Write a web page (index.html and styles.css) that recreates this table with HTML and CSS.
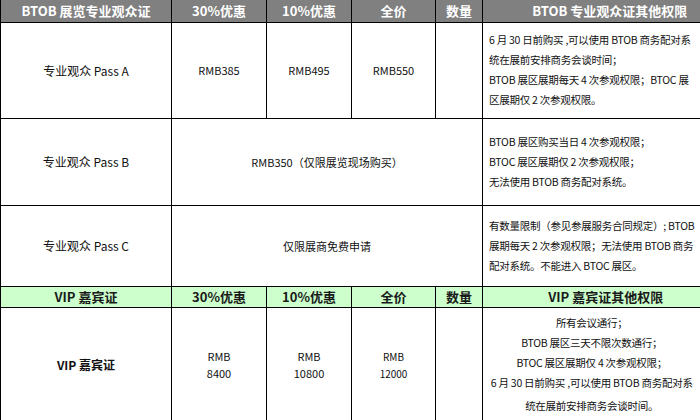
FILE: index.html
```html
<!DOCTYPE html>
<html lang="zh">
<head>
<meta charset="utf-8">
<title>BTOB 展览专业观众证</title>
<link rel="stylesheet" href="styles.css">
</head>
<body>
<table class="price-table">
  <colgroup>
    <col class="c-name">
    <col class="c-30">
    <col class="c-10">
    <col class="c-full">
    <col class="c-qty">
    <col class="c-rights">
  </colgroup>
  <tr class="head head-gray">
    <th>BTOB 展览专业观众证</th>
    <th>30%优惠</th>
    <th>10%优惠</th>
    <th>全价</th>
    <th>数量</th>
    <th class="rights-head rights-head-a">BTOB 专业观众证其他权限</th>
  </tr>
  <tr class="row-a">
    <td class="name">专业观众 Pass A</td>
    <td class="price">RMB385</td>
    <td class="price">RMB495</td>
    <td class="price">RMB550</td>
    <td></td>
    <td class="rights">
      <div class="line">6 月 30 日前购买 ,可以使用 BTOB 商务配对系</div>
      <div class="line">统在展前安排商务会谈时间；</div>
      <div class="line">BTOB 展区展期每天 4 次参观权限；BTOC 展</div>
      <div class="line">区展期仅 2 次参观权限。</div>
    </td>
  </tr>
  <tr class="row-b">
    <td class="name">专业观众 Pass B</td>
    <td class="price" colspan="4">RMB350（仅限展览现场购买）</td>
    <td class="rights">
      <div class="line">BTOB 展区购买当日 4 次参观权限；</div>
      <div class="line">BTOC 展区展期仅 2 次参观权限；</div>
      <div class="line">无法使用 BTOB 商务配对系统。</div>
    </td>
  </tr>
  <tr class="row-c">
    <td class="name">专业观众 Pass C</td>
    <td class="price" colspan="4">仅限展商免费申请</td>
    <td class="rights">
      <div class="line">有数量限制（参见参展服务合同规定）; BTOB</div>
      <div class="line">展期每天 2 次参观权限；无法使用 BTOB 商务</div>
      <div class="line">配对系统。不能进入 BTOC 展区。</div>
    </td>
  </tr>
  <tr class="head head-green">
    <th>VIP 嘉宾证</th>
    <th>30%优惠</th>
    <th>10%优惠</th>
    <th>全价</th>
    <th>数量</th>
    <th class="rights-head rights-head-vip">VIP 嘉宾证其他权限</th>
  </tr>
  <tr class="row-vip">
    <td class="name name-bold">VIP 嘉宾证</td>
    <td class="price price-stack">RMB<br>8400</td>
    <td class="price price-stack">RMB<br>10800</td>
    <td class="price price-stack price-small">RMB<br>12000</td>
    <td></td>
    <td class="rights rights-center">
      <div class="line">所有会议通行；</div>
      <div class="line">BTOB 展区三天不限次数通行；</div>
      <div class="line">BTOC 展区展期仅 4 次参观权限；</div>
      <div class="line">6 月 30 日前购买 ,可以使用 BTOB 商务配对系</div>
      <div class="line line-last">统在展前安排商务会谈时间。</div>
    </td>
  </tr>
</table>
</body>
</html>
```

FILE: styles.css
```css
html, body {
  margin: 0;
  padding: 0;
  background: #ffffff;
  overflow: hidden;
}

body {
  font-family: "Noto Sans CJK SC", "Noto Sans", sans-serif;
  color: #111111;
}

.price-table {
  border-collapse: collapse;
  table-layout: fixed;
  width: 700px;
}

.c-name { width: 171px; }
.c-30 { width: 95px; }
.c-10 { width: 85px; }
.c-full { width: 84px; }
.c-qty { width: 47px; }
.c-rights { width: 218px; }

.price-table th,
.price-table td {
  border: 1px solid #000000;
  padding: 0;
  text-align: center;
  vertical-align: middle;
}

.price-table tr > :last-child {
  border-right: none;
}

.price-table tr:first-child > th {
  border-top: none;
}

.head th {
  font-size: 13px;
  font-weight: bold;
  line-height: 16px;
}

.head-gray { height: 22px; }
.head-gray th {
  background: #808080;
  color: #ffffff;
}

.head-green { height: 21px; }
.head-green th {
  background: #ccffcc;
  color: #1a1a1a;
}

.rights-head-a { padding-left: 36px !important; }
.rights-head-vip { padding-left: 28px !important; }

.row-a { height: 96px; }
.row-b { height: 87px; }
.row-c { height: 81px; }
.row-vip { height: 115px; }

.name {
  font-size: 12px;
}

.name-bold {
  font-weight: bold;
}

.price {
  font-size: 11px;
}

.price-stack {
  line-height: 17px;
}

.price-small {
  font-size: 10px;
}

.rights {
  text-align: left !important;
  padding: 0 6px !important;
  font-size: 10.5px;
  letter-spacing: -0.25px;
  line-height: 20px;
  overflow: hidden;
}

.rights-center {
  text-align: center !important;
}

.line {
  white-space: nowrap;
}

.line-last {
  padding-top: 3px;
}
```
